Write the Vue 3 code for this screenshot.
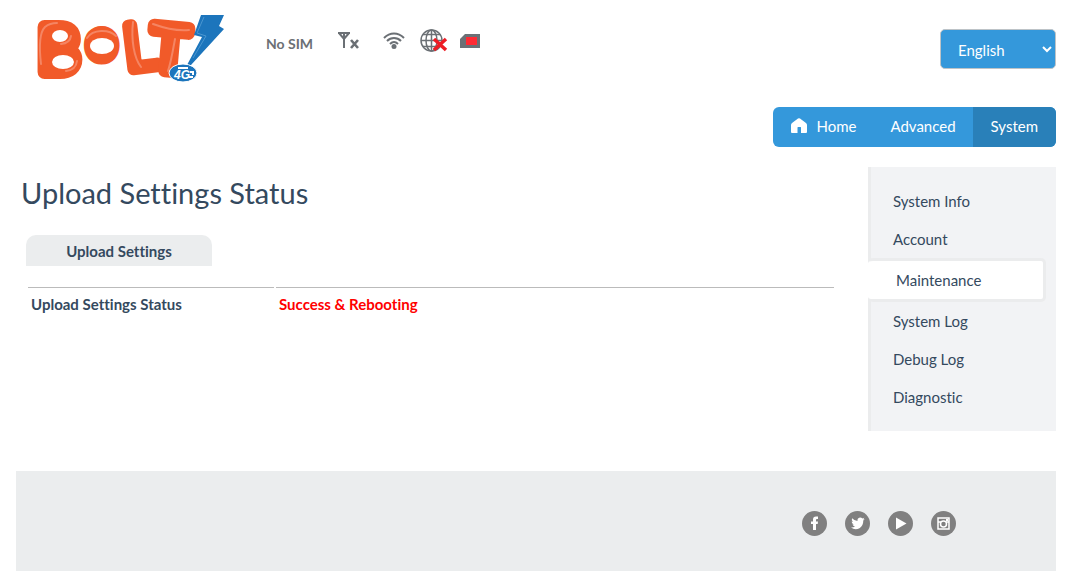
<script setup>
import { ref } from 'vue'

const language = ref('English')
const sections = ['System Info', 'Account', 'Maintenance', 'System Log', 'Debug Log', 'Diagnostic']
const current = ref('Maintenance')
</script>

<template>
  <div class="page">
    <header class="top">
      <a href="#" class="logo" aria-label="Bolt home">
        <svg width="190" height="98" viewBox="0 -10 190 98">
          <g class="word">
            <text x="3" y="60" font-size="61" stroke-width="14">B</text>
            <text x="52" y="46" class="wide" font-size="35" stroke-width="12">O</text>
            <text x="91" y="57" font-size="62" font-weight="300" stroke-width="12" transform="rotate(-7 100 57)">L</text>
            <text x="115" y="59" font-size="62" stroke-width="13" transform="rotate(5 132 40)">T</text>
          </g>
          <g fill="#fff">
            <ellipse cx="24" cy="24" rx="8" ry="6" />
            <ellipse cx="27" cy="50" rx="11" ry="7" />
            <ellipse cx="66" cy="34" rx="12" ry="8" />
          </g>
          <g class="shine">
            <path d="M5 52C3 35 4 20 9 15Q14 11 21 11" />
            <path d="M35 24Q34 31 25 32M41 49Q40 58 30 59" />
            <path d="M51 26C57 17 73 17 80 24" />
            <path d="M97 10C95 28 98 46 105 55" />
            <path d="M117 12C128 16 142 19 153 18" />
            <path d="M139 27C137 38 135 50 132 59" />
          </g>
          <path d="M165 3H188L183 14L188 17L155 53H151L166 25L158 23Z" fill="#1c75bc" />
          <path d="M168 5L161 21L170 24L157 46" class="edge" />
          <ellipse cx="147" cy="61" rx="14" ry="9" fill="#1c75bc" stroke="#fff" stroke-width="1" />
          <path d="M142 56H152M154 60H157V63M153 65H157" class="tag" />
          <text x="138" y="67" class="badge" font-size="12">4G</text>
        </svg>
      </a>
      <div class="status">
        <span class="sim">No SIM</span>
        <svg class="signal" width="24" height="20" viewBox="0 0 24 20" fill="none" stroke="#6b7075">
          <path d="M1 2H13M2 2L7 8L12 2M7 1V17" stroke-width="2" />
          <path d="M14 9L21 17M21 9L14 17" stroke-width="2.6" />
        </svg>
        <svg class="wifi" width="22" height="18" viewBox="0 0 22 18" fill="none" stroke="#6b7075" stroke-width="2">
          <path d="M1 6C7 0 15 0 21 6M4 9C8 5 14 5 18 9M7 12C9.500 9.500 12.500 9.500 15 12" />
          <circle cx="11" cy="14.500" r="2.500" fill="#6b7075" stroke="none" />
        </svg>
        <svg class="globe" width="28" height="24" viewBox="0 0 28 24" fill="none" stroke="#6b7075" stroke-width="1.500">
          <circle cx="11.500" cy="11.500" r="10.500" />
          <ellipse cx="11.500" cy="11.500" rx="5.500" ry="10.500" />
          <path d="M11.500 1V22M1 11.500H22M3 5.500H20M3 17.500H20" />
          <path d="M14 10L26 21M26 10L14 21" stroke="#ed1c24" stroke-width="3.500" />
        </svg>
        <svg class="card" width="20" height="14" viewBox="0 0 20 14">
          <path d="M0 14V5L5 0H20V14Z" fill="#6b7075" />
          <path d="M6 3H17V11H6Z" fill="#ff2a33" />
        </svg>
      </div>
      <select v-model="language" class="language" aria-label="Language">
        <option>English</option>
        <option>Bahasa</option>
      </select>
    </header>

    <nav class="menu" aria-label="Main">
      <a href="#" class="item">
        <svg width="16" height="16" viewBox="0 0 16 16"><path d="M0 7Q0 6 1 5L7 .5Q8 -.2 9 .5L15 5Q16 6 16 7V14Q16 15 15 15H10V9.500Q10 9 9.500 9H7Q6.500 9 6.500 9.500V15H1Q0 15 0 14Z" fill="#fff" /></svg>
        Home
      </a>
      <a href="#" class="item">Advanced</a>
      <a href="#" class="item active">System</a>
    </nav>

    <div class="body">
      <main>
        <h1>Upload Settings Status</h1>
        <h2>Upload Settings</h2>
        <table>
          <tbody>
            <tr>
              <th scope="row">Upload Settings Status</th>
              <td>Success &amp; Rebooting</td>
            </tr>
          </tbody>
        </table>
      </main>
      <aside>
        <a v-for="s in sections" :key="s" href="#" :class="{ active: s === current }" @click.prevent="current = s">{{ s }}</a>
      </aside>
    </div>

    <footer>
      <a href="#" aria-label="Facebook">
        <svg viewBox="0 0 25 25"><circle cx="12.500" cy="12.500" r="12.500" /><path d="M11 19V13H9V10.500H11V8.500Q11 5.500 14 5.500H16V8H14.800Q14 8 14 9V10.500H16L15.700 13H14V19Z" fill="#fff" /></svg>
      </a>
      <a href="#" aria-label="Twitter">
        <svg viewBox="0 0 25 25"><circle cx="12.500" cy="12.500" r="12.500" /><path d="M6 16.500Q8.500 16.600 10 15.500Q8 15.200 7.500 13.500H8.800Q6.700 12.700 6.600 10.500L7.900 10.900Q6 9 7.200 7.200Q9.500 9.900 12.500 10Q12 7 15 6.500Q16.500 6.500 17.500 7.500L19.300 6.800L18.200 8.400L19.700 8L18.300 9.600Q18.300 15 14.500 17.200Q10 19.500 6 16.500Z" fill="#fff" /></svg>
      </a>
      <a href="#" aria-label="YouTube">
        <svg viewBox="0 0 25 25"><circle cx="12.500" cy="12.500" r="12.500" /><path d="M8 6.500L18.500 12.500L8 18.500Z" fill="#fff" /></svg>
      </a>
      <a href="#" aria-label="Instagram">
        <svg viewBox="0 0 25 25"><circle cx="12.500" cy="12.500" r="12.500" /><path d="M7 7H18V18H7ZM7 11H10M15 11H18" fill="none" stroke="#fff" stroke-width="1.500" /><circle cx="12.500" cy="13" r="3" fill="none" stroke="#fff" stroke-width="1.500" /><path d="M15 8H17V10H15Z" fill="#fff" /></svg>
      </a>
    </footer>
  </div>
</template>

<style>
body {
  margin: 0;
  background: #fff;
}
</style>

<style scoped>
.page {
  box-sizing: border-box;
  padding: 0 11px 14px 16px;
  color: #34495e;
  font: 15px/20px Lato, "Liberation Sans", sans-serif;
  font-variant-ligatures: none;
}
a {
  color: inherit;
  text-decoration: none;
}
svg {
  display: block;
}
.top {
  display: flex;
  align-items: flex-start;
  height: 107px;
}
.logo {
  margin: 2px 0 0 20px;
}
.logo svg {
  overflow: visible;
}
.word {
  fill: #f15a29;
  stroke: #f15a29;
  stroke-linejoin: round;
  font-family: Lato, sans-serif;
}
.wide {
  font-family: "DejaVu Sans", sans-serif;
}
.shine {
  fill: none;
  stroke: #f58563;
  stroke-width: 2;
  stroke-linecap: round;
}
.edge {
  fill: none;
  stroke: #4a96d0;
  stroke-width: 1;
}
.tag {
  fill: none;
  stroke: #fff;
  stroke-width: 2;
}
.badge {
  fill: #fff;
  font-family: "Liberation Sans", sans-serif;
  font-weight: 700;
  font-style: italic;
}
.status {
  display: flex;
  align-items: center;
  margin: 28px 0 0 40px;
}
.sim {
  padding-top: 6px;
  color: #6b7075;
  font-size: 14px;
  font-weight: 700;
}
.signal {
  margin-left: 24px;
}
.wifi {
  margin-left: 22px;
}
.globe {
  margin-left: 15px;
}
.card {
  margin-left: 12px;
}
.language {
  width: 116px;
  height: 40px;
  margin: 29px 0 0 auto;
  padding: 2px 0 0 13px;
  border: 1px solid #bdc3c7;
  border-radius: 5px;
  background: #3498db;
  color: #fff;
  font: 15px Lato, sans-serif;
}
.menu {
  display: flex;
  box-sizing: border-box;
  width: fit-content;
  height: 40px;
  margin-left: auto;
  padding-left: 1px;
  overflow: hidden;
  border-radius: 6px;
  background: #3498db;
  color: #fff;
}
.item {
  display: flex;
  align-items: center;
  gap: 9px;
  padding: 0 17px 2px;
}
.menu .active {
  padding: 0 18px 2px;
  background: #2980b9;
}
.body {
  display: flex;
  gap: 32px;
  margin-top: 20px;
}
main {
  flex: 1;
  padding-left: 5px;
}
h1 {
  margin: 7px 0 23px;
  font-size: 29px;
  font-weight: 400;
  line-height: 38px;
}
h2 {
  width: 186px;
  margin: 0 0 19px 5px;
  padding: 6px 0 5px;
  border-radius: 10px 10px 0 0;
  background: #ebedee;
  font-size: 15px;
  font-weight: 700;
  line-height: 20px;
  text-align: center;
}
table {
  width: calc(100% - 5px);
  margin-left: 5px;
  border-spacing: 2px;
  table-layout: fixed;
}
th,
td {
  padding: 6px 3px 8px;
  border-top: 1px solid #bbb;
  font-weight: 700;
  text-align: left;
}
th {
  width: 240px;
}
td {
  color: #f00;
}
aside {
  box-sizing: border-box;
  width: 188px;
  padding: 15px 0;
  border-left: 3px solid #ebeced;
  background: #f2f3f5;
}
aside a {
  display: block;
  padding: 9px 22px;
}
aside .active {
  margin: 0 10px 0 -3px;
  padding-left: 28px;
  border: 3px solid #ebeced;
  border-left: 0;
  border-radius: 5px;
  background: #fff;
}
footer {
  display: flex;
  align-items: center;
  justify-content: flex-end;
  gap: 18px;
  height: 100px;
  margin-top: 40px;
  padding: 0 100px;
  background: #ebedee;
}
footer svg {
  width: 25px;
  height: 25px;
  margin-top: 5px;
  fill: #808080;
}
</style>
